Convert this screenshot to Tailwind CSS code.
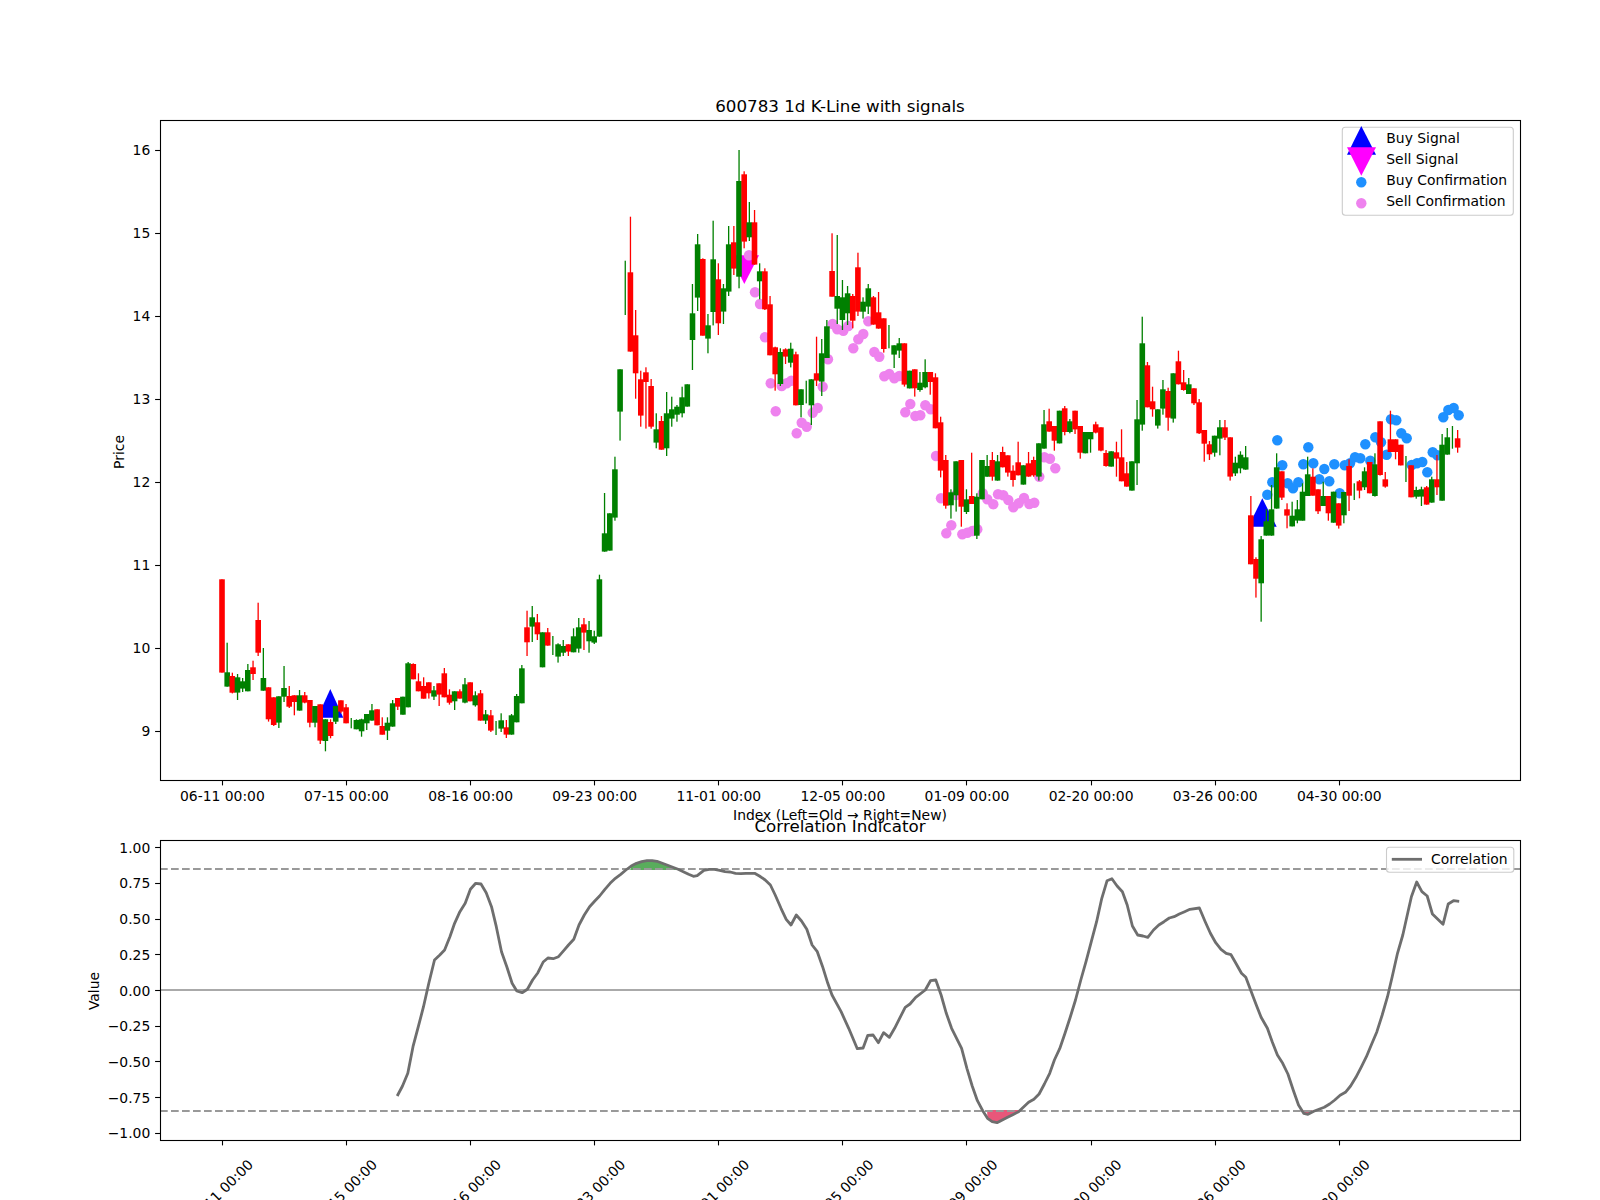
<!DOCTYPE html>
<html lang="en">
<head>
    <meta charset="UTF-8">
    <title>600783 1d K-Line with signals</title>
    <script src="https://cdn.jsdelivr.net/npm/@tailwindcss/browser@4"></script>
</head>
<body class="bg-white">
<div class="w-[1600px] h-[1200px] overflow-hidden bg-white">
    <svg id="chart" class="block font-['DejaVu_Sans',sans-serif] text-[13.9px] fill-black" width="1600" height="1200" viewBox="0 0 1600 1200" xmlns="http://www.w3.org/2000/svg"></svg>
</div>
<script>
    // candles: [colour, wick top, body top, body bottom, wick bottom], read off crops at 3x
    const candles = [];
    const section = (y0, rows) => rows.forEach(r => candles.push([r[0], y0 + r[1] / 3, y0 + r[2] / 3, y0 + r[3] / 3, y0 + r[4] / 3]));

    section(570, [
        ['r',28,28,308,308],['g',218,307,350,350],['r',308,318,368,370],['g',312,322,368,390],['g',324,334,356,366],
        ['g',282,300,364,364],['r',272,292,312,330],['r',98,150,248,258],['g',234,324,362,362],['r',352,352,448,455],
        ['r',382,382,465,468],['g',379,379,458,474],['g',288,354,380,396],['r',348,378,410,414],['r',376,376,396,436],
        ['g',360,376,422,422],['r',366,376,398,400],['r',390,390,458,472],['g',408,408,458,472],['r',403,403,512,522],
        ['g',448,448,513,544],['r',448,456,498,505],['g',408,408,455,462],['r',391,391,425,430],['r',402,412,460,460],
        ['g',444,444,444,475],['g',448,450,478,478],['g',446,448,484,500],['g',432,432,460,480],['g',402,421,452,452],
        ['r',418,418,466,466],['r',442,468,494,494],['g',442,458,482,510],['g',390,400,470,470],['r',384,384,410,420],
        ['g',380,380,434,434]
    ]);
    section(560, [
        ['g',306,310,442,442],['r',310,312,358,358],['r',340,364,394,394],['r',352,378,416,416],['r',367,367,400,416],
        ['g',378,391,410,420],['r',370,370,404,438],['r',324,340,412,412],['r',388,404,428,434],['g',394,394,424,450],
        ['r',388,394,416,416],['g',354,373,428,430],['r',367,367,424,424],['g',394,406,436,440],['r',390,400,482,482],
        ['g',450,463,482,492],['r',450,466,512,516],['g',483,483,483,525],['g',460,481,506,516],['r',480,502,524,534],
        ['g',462,466,524,524],['g',402,408,487,487],['g',315,325,430,430],['r',152,202,247,288],['g',138,172,200,246],
        ['r',162,187,223,240],['g',217,217,322,322],['r',204,217,257,257],['g',228,228,228,285],['g',250,253,290,308],
        ['g',240,258,278,288],['r',253,253,275,288],['g',205,229,277,277],['g',174,202,266,278],['r',174,193,218,270],
        ['g',183,210,244,278],['g',212,229,248,252],['g',44,58,230,230]
    ]);
    section(500, [
        ['g',-21,100,155,155],['g',40,40,152,152],['g',-130,-92,53,62]
    ]);
    section(140, [
        ['g',688,688,815,902],['g',362,362,362,525],['r',230,397,635,635],['r',510,586,700,776],['r',692,718,827,860],
        ['r',682,697,726,866],['r',717,738,860,866],['g',820,868,908,925],['r',828,843,929,929],['g',756,820,925,948],
        ['g',770,808,836,860],['g',795,800,824,845],['g',740,772,820,832],['g',733,733,800,800],['g',432,520,600,690],
        ['g',282,313,473,513],['r',355,357,587,587],['g',522,556,596,640],['g',242,358,516,556],['r',370,418,550,585],
        ['g',432,445,515,552],['g',258,313,455,468],['r',258,307,386,405],['g',30,123,410,445],['r',94,103,305,325],
        ['g',186,247,292,303],['r',210,247,374,374],['g',370,394,424,478],['r',385,394,508,510],['r',468,493,646,646],
        ['r',620,622,703,752],['g',625,636,732,738],['r',625,628,650,672],['g',608,626,668,682],['r',635,643,796,796],
        ['g',748,748,795,832],['g',722,722,722,790],['g',718,718,796,855],['r',590,700,722,738],['g',597,640,725,768],
        ['g',540,559,654,654],['r',280,393,470,470],['g',285,468,506,552],['g',420,472,540,570],['g',438,460,520,555]
    ]);
    section(220, [
        ['r',222,228,302,325],['r',98,142,275,288],['g',232,245,275,296],['g',192,205,260,282],['r',228,232,314,314],
        ['r',216,277,326,326],['r',295,295,387,398],['g',315,315,315,385],['g',376,376,404,444],['g',354,370,392,414],
        ['r',370,370,494,500],['g',452,452,505,505],['r',448,448,505,530],['g',456,488,510,515],['g',418,456,502,505],
        ['r',456,456,486,524],['r',460,472,625,625],['r',590,607,752,772],['r',705,720,857,866],['g',808,817,856,896],
        ['g',724,724,826,875],['r',720,720,860,920],['g',808,838,876,882],['r',698,828,852,852],['g',820,830,947,957],
        ['g',720,720,838,838],['g',705,738,770,770],['r',696,720,770,782],['g',705,724,782,782],['r',680,696,742,742],
        ['r',706,706,758,770],['r',736,752,780,800],['r',665,727,766,766],['g',736,736,794,794],['r',696,730,770,770],
        ['r',710,720,766,770],['g',670,670,770,782],['g',570,613,686,686],['r',566,604,635,635],['r',618,618,662,692],
        ['g',572,572,670,670],['r',558,565,636,646],['g',597,604,636,640],['r',572,572,628,642],['r',618,618,698,716],
        ['g',636,636,700,700],['g',636,636,658,698],['r',605,613,638,640],['r',622,622,692,694],['r',690,699,738,740],
        ['g',694,694,740,740],['r',665,697,716,770],['r',628,712,784,784],['r',726,760,800,800],['g',724,724,812,812],
        ['g',540,598,730,795],['g',290,370,614,632],['r',426,436,562,562]
    ]);
    section(110, [
        ['r',830,874,898,920],['g',898,898,947,956],['g',810,838,896,914],['r',833,843,923,962],['g',790,790,926,938],
        ['r',722,754,823,823],['r',780,817,840,842],['g',804,823,852,852],['r',835,835,880,885],['r',867,877,970,972],
        ['r',960,960,1001,1055],['r',993,1003,1033,1050],['g',977,977,1028,1040],['g',930,952,986,1036],['r',930,952,983,990],
        ['r',982,982,1100,1112],['g',1040,1058,1090,1098],['g',1024,1034,1075,1090],['g',1008,1042,1079,1079],['r',1158,1216,1363,1363],
        ['r',1342,1347,1406,1463],['g',1278,1288,1420,1535],['g',1198,1234,1277,1277],['g',1125,1198,1277,1277],['g',1030,1072,1196,1196],
        ['r',1084,1084,1163,1170],['r',1180,1198,1217,1255],['g',1175,1217,1249,1249],['g',1170,1198,1232,1240],['g',1120,1145,1232,1232],
        ['g',1040,1093,1158,1158],['r',1075,1100,1157,1157],['r',1138,1138,1204,1212],['g',1115,1158,1188,1188],['r',1158,1158,1210,1232],
        ['g',1145,1145,1238,1238],['r',1180,1180,1247,1256],['g',1146,1146,1216,1240],['r',1048,1068,1157,1203],['g',1120,1120,1120,1170],
        ['r',1110,1114,1142,1165],['g',1072,1084,1132,1140],['r',1056,1056,1150,1150],['g',1030,1063,1158,1160],['r',934,934,1095,1097],
        ['r',1086,1108,1130,1133],['r',902,988,1026,1026],['r',988,988,1026,1048],['r',1004,1004,1066,1066],['g',1038,1038,1038,1116],
        ['r',1066,1066,1162,1162],['g',1130,1140,1160,1166],['g',1130,1138,1160,1188],['r',1128,1132,1184,1184],['g',1100,1108,1178,1178],
        ['r',1035,1108,1132,1155],['g',972,1004,1172,1172],['g',954,982,1034,1034],['g',948,948,948,1016],['r',960,985,1013,1028]
    ]);

    // confirmation dots, same crops
    const sellDots = [
        [447,346],[465,457],[480,492],[495,592],[512,730],[527,814],[545,738],[560,730],[574,722],[590,880],[605,848],[620,860],
        [638,818],[653,804],[668,740],[684,658],[698,552],[712,568],[730,572],[745,558],[760,625],[775,598],[790,582],[805,544],
        [823,636],[838,650],[853,709],[868,702],[883,715],[898,708],[916,817],[931,792],[946,828],[961,826],[976,796],[992,808],[1008,948]
    ].map(p => [600 + p[0] / 3, 140 + p[1] / 3]).concat([
        [273,835],[289,940],[304,916],[318,825],[337,943],[352,938],[367,933],[382,928],[398,820],[412,838],[430,853],[444,823],
        [460,826],[475,840],[490,862],[506,850],[522,834],[538,852],[553,848],[568,770],[583,712],[600,716],[616,745]
    ].map(p => [850 + p[0] / 3, 220 + p[1] / 3]));

    const buyDots = [
        [352,1154],[367,1117],[382,991],[397,1066],[413,1120],[429,1135],[445,1117],[460,1063],[475,1012],[490,1060],[508,1108],
        [523,1077],[538,1114],[553,1063],[569,1150],[584,1066],[600,1060],[615,1042],[631,1045],[646,1003],[661,1052],[676,982],
        [693,997],[710,1034],[723,928],[739,931],[754,970],[770,985],[785,1065],[801,1060],[817,1056],[832,1087],[848,1027],
        [862,1036],[880,922],[895,900],[911,894],[926,916]
    ].map(p => [1150 + p[0] / 3, 110 + p[1] / 3]);

    // correlation curve, crops are 2.09x wide and 3x tall
    const left = p => [80 + p[0] / 2.09, 820 + p[1] / 3];
    const right = p => [820 + p[0] / 2.09, 820 + p[1] / 3];
    const corr = [
        [663,828],[674,798],[685,760],[696,680],[707,620],[718,560],[729,490],[741,420],[752,405],[762,390],[773,350],[783,310],[794,275],[805,250],
        [816,208],[827,190],[838,192],[849,218],[860,260],[870,320],[881,395],[892,440],[903,490],[913,513],[924,518],[935,508],[946,480],[957,458],
        [968,426],[978,414],[989,416],[1000,410],[1011,392],[1021,375],[1032,358],[1043,315],[1054,285],[1065,260],[1076,243],[1086,228],[1097,208],
        [1108,190],[1119,175],[1130,163],[1141,150],[1152,138],[1163,130],[1174,125],[1185,122],[1196,122],[1206,124],[1217,130],[1228,136],[1239,142],
        [1250,148],[1261,155],[1272,163],[1282,169],[1290,167],[1304,151],[1315,148],[1326,148],[1337,151],[1348,155],[1359,156],[1370,160],[1381,161],
        [1392,160],[1410,160],[1420,168],[1432,180],[1443,195],[1453,225],[1465,265],[1476,298],[1486,315],[1497,285],[1508,303],[1519,328],[1530,375],
        [1541,395],[1552,440],[1563,490]
    ].map(left).concat([
        [25,525],[44,575],[60,625],[78,686],[90,684],[100,646],[111,645],[122,668],[133,638],[145,652],[156,625],[178,562],[188,552],[200,532],[220,510],
        [231,482],[242,480],[253,525],[264,580],[275,625],[296,685],[307,745],[318,798],[329,842],[340,872],[350,895],[360,905],[370,908],[381,900],[392,892],
        [403,884],[415,875],[425,862],[436,847],[447,838],[458,822],[469,792],[480,760],[490,720],[501,686],[512,640],[523,592],[534,540],[545,480],[556,425],
        [567,365],[578,305],[589,235],[600,182],[610,176],[621,198],[632,215],[642,255],[653,318],[664,345],[675,348],[685,352],[697,330],[708,315],[719,305],
        [730,294],[740,290],[751,282],[762,275],[773,268],[793,264],[805,305],[816,340],[827,368],[838,388],[849,400],[859,404],[870,432],[881,460],[890,472],
        [900,510],[911,552],[922,592],[935,625],[945,665],[956,705],[967,730],[978,762],[989,810],[1000,855],[1011,880],[1020,883],[1032,874],[1043,868],
        [1054,862],[1065,852],[1076,840],[1087,826],[1098,817],[1109,798],[1120,772],[1131,742],[1142,710],[1153,672],[1164,635],[1175,585],[1186,530],
        [1196,470],[1207,400],[1218,345],[1229,275],[1236,230],[1247,186],[1258,215],[1269,228],[1280,282],[1302,313],[1313,252],[1324,242],[1336,244]
    ].map(right));

    const pts = list => list.map(p => p[0].toFixed(1) + ',' + p[1].toFixed(1)).join(' ');
    const tickX = k => 222.4 + 124.1 * k;
    const snap = v => Math.floor(v) + 0.5;
    const dates = ['06-11 00:00','07-15 00:00','08-16 00:00','09-23 00:00','11-01 00:00','12-05 00:00','01-09 00:00','02-20 00:00','03-26 00:00','04-30 00:00'];

    let s = '';

    // price panel: signals and dots sit under the candles
    s += `<polygon class="fill-[#0000ff]" points="330.3,689 343.3,717.7 317.3,717.7"/>`;
    s += `<polygon class="fill-[#0000ff]" points="1262.3,498.3 1276.7,526.7 1248.3,526.7"/>`;
    s += `<polygon class="fill-[#ff00ff]" points="730,255.3 759,255.3 744.3,284"/>`;
    sellDots.forEach(p => { s += `<circle class="fill-[#ee82ee]" cx="${p[0].toFixed(1)}" cy="${p[1].toFixed(1)}" r="5.2"/>`; });
    buyDots.forEach(p => { s += `<circle class="fill-[#1e90ff]" cx="${p[0].toFixed(1)}" cy="${p[1].toFixed(1)}" r="5.2"/>`; });

    candles.forEach((c, i) => {
        const x = 222 + 5.17 * i;
        const fill = c[0] === 'r' ? 'fill-[#ff0000]' : 'fill-[#008000]';
        s += `<rect class="${fill}" x="${(x - 0.65).toFixed(1)}" y="${c[1].toFixed(1)}" width="1.3" height="${(c[4] - c[1]).toFixed(1)}"/>`;
        if (c[3] > c[2]) s += `<rect class="${fill}" x="${(x - 2.8).toFixed(1)}" y="${c[2].toFixed(1)}" width="5.6" height="${(c[3] - c[2]).toFixed(1)}"/>`;
    });

    // correlation panel: dashes go over the fills, the curve over both
    const greenFill = [[1150,150],[1152,138],[1163,130],[1174,125],[1185,122],[1196,122],[1206,124],[1217,130],[1228,136],[1239,142],[1248,150]].map(left);
    const redFill = [[349,870],[350,895],[360,905],[370,908],[381,900],[392,892],[403,884],[418,870]].map(right);
    const redFill2 = [[1010,870],[1011,880],[1020,883],[1030,870]].map(right);
    s += `<polygon class="fill-[#59ad5c]" points="${pts(greenFill)}"/>`;
    s += `<polygon class="fill-[#e8577a]" points="${pts(redFill)}"/>`;
    s += `<polygon class="fill-[#e8577a]" points="${pts(redFill2)}"/>`;
    s += `<line class="stroke-[#aaaaaa] stroke-2" x1="160" y1="990" x2="1520" y2="990"/>`;
    [869, 1111].forEach(y => { s += `<line class="stroke-[#999999] stroke-2" stroke-dasharray="7.7 3.3" x1="160" y1="${y}" x2="1520" y2="${y}"/>`; });
    s += `<polyline class="fill-none stroke-[#6e6e6e] stroke-[2.8px]" stroke-linejoin="round" points="${pts(corr)}"/>`;

    // frames and ticks
    s += `<rect class="fill-none stroke-black stroke-[1.1px]" x="160.5" y="120.5" width="1360" height="660"/>`;
    s += `<rect class="fill-none stroke-black stroke-[1.1px]" x="160.5" y="840.5" width="1360" height="300"/>`;
    for (let v = 9; v <= 16; v++) {
        const y = 150.3 + 83 * (16 - v);
        s += `<line class="stroke-black stroke-[1.1px]" x1="155.1" y1="${snap(y)}" x2="160" y2="${snap(y)}"/>`;
        s += `<text x="150.3" y="${y + 5}" text-anchor="end">${v}</text>`;
    }
    ['1.00','0.75','0.50','0.25','0.00','\u22120.25','\u22120.50','\u22120.75','\u22121.00'].forEach((t, k) => {
        const y = 847.7 + 35.7 * k;
        s += `<line class="stroke-black stroke-[1.1px]" x1="155.1" y1="${snap(y)}" x2="160" y2="${snap(y)}"/>`;
        s += `<text x="150.3" y="${y + 5}" text-anchor="end">${t}</text>`;
    });
    dates.forEach((d, k) => {
        const x = tickX(k);
        s += `<line class="stroke-black stroke-[1.1px]" x1="${snap(x)}" y1="780" x2="${snap(x)}" y2="785.4"/>`;
        s += `<text x="${x}" y="801" text-anchor="middle">${d}</text>`;
        s += `<line class="stroke-black stroke-[1.1px]" x1="${snap(x)}" y1="1140" x2="${snap(x)}" y2="1145.4"/>`;
        s += `<text x="${x - 2}" y="1197" text-anchor="middle" transform="rotate(-45 ${x - 2} 1192)">${d}</text>`;
    });

    // titles and axis labels
    s += `<text class="text-[16.7px]" x="840" y="112" text-anchor="middle">600783 1d K-Line with signals</text>`;
    s += `<text x="840" y="820" text-anchor="middle">Index (Left=Old \u2192 Right=New)</text>`;
    s += `<text class="text-[16.7px]" x="840" y="832" text-anchor="middle">Correlation Indicator</text>`;
    s += `<text x="124" y="452" text-anchor="middle" transform="rotate(-90 124 452)">Price</text>`;
    s += `<text x="99" y="991" text-anchor="middle" transform="rotate(-90 99 991)">Value</text>`;

    // legends
    s += `<rect class="fill-white/80 stroke-[#cccccc] stroke-[1.1px]" x="1342.3" y="127.3" width="171" height="88" rx="3"/>`;
    s += `<polygon class="fill-[#0000ff]" points="1361.3,126 1376,154.7 1347,154.7"/>`;
    s += `<polygon class="fill-[#ff00ff]" points="1347,147.3 1376,147.3 1361.3,175.7"/>`;
    s += `<circle class="fill-[#1e90ff]" cx="1361.3" cy="182.3" r="5.2"/>`;
    s += `<circle class="fill-[#ee82ee]" cx="1361.3" cy="203.3" r="5.2"/>`;
    ['Buy Signal','Sell Signal','Buy Confirmation','Sell Confirmation'].forEach((t, k) => {
        s += `<text x="1386.3" y="${142.7 + 21 * k}">${t}</text>`;
    });
    s += `<rect class="fill-white/80 stroke-[#cccccc] stroke-[1.1px]" x="1386.5" y="847.3" width="127.3" height="25" rx="3"/>`;
    s += `<line class="stroke-[#6e6e6e] stroke-[2.8px]" x1="1391.8" y1="859.3" x2="1422" y2="859.3"/>`;
    s += `<text x="1431" y="864">Correlation</text>`;

    document.getElementById('chart').innerHTML = s;
</script>
</body>
</html>
